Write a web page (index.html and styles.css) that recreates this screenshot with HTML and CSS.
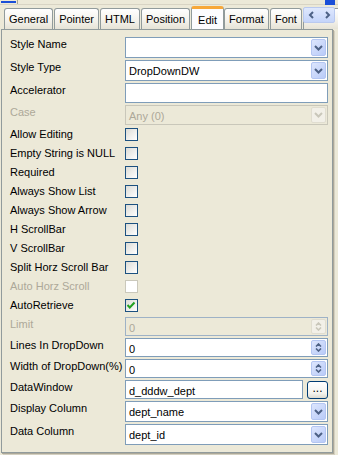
FILE: index.html
```html
<!DOCTYPE html>
<html lang="en">
  <head>
    <meta charset="UTF-8" />
    <title>Edit properties</title>
    <link rel="stylesheet" href="styles.css">
  </head>
  <body>
    <div class="topbar">
      <span class="blue-left"></span>
      <span class="tick"></span>
      <span class="blue-right"></span>
    </div>
    <div class="tabs">
      <div class="tab">General</div>
      <div class="tab">Pointer</div>
      <div class="tab">HTML</div>
      <div class="tab">Position</div>
      <div class="tab active">Edit</div>
      <div class="tab">Format</div>
      <div class="tab">Font</div>
      <div class="tab hidden-tab"></div>
      <div class="tab-scroll">
        <svg width="8" height="8" viewBox="0 0 8 8"><path d="M5 1 L2 4 L5 7" fill="none" stroke="#4d6185" stroke-width="2"/></svg>
        <svg width="8" height="8" viewBox="0 0 8 8"><path d="M3 1 L6 4 L3 7" fill="none" stroke="#4d6185" stroke-width="2"/></svg>
      </div>
    </div>

    <div class="panel">
      <div class="row first">
        <span class="lbl">Style Name</span>
        <div class="combo"><span class="val"></span><span class="dd"><svg width="9" height="6" viewBox="0 0 9 6"><path d="M1 1 L4.5 4.5 L8 1" fill="none" stroke="#4d6185" stroke-width="2"/></svg></span></div>
      </div>
      <div class="row">
        <span class="lbl">Style Type</span>
        <div class="combo"><span class="val">DropDownDW</span><span class="dd"><svg width="9" height="6" viewBox="0 0 9 6"><path d="M1 1 L4.5 4.5 L8 1" fill="none" stroke="#4d6185" stroke-width="2"/></svg></span></div>
      </div>
      <div class="row h20">
        <span class="lbl">Accelerator</span>
        <div class="edit"></div>
      </div>
      <div class="row h20">
        <span class="lbl off">Case</span>
        <div class="combo disabled"><span class="val">Any (0)</span><span class="dd"><svg width="9" height="6" viewBox="0 0 9 6"><path d="M1 1 L4.5 4.5 L8 1" fill="none" stroke="#c9c7ba" stroke-width="2"/></svg></span></div>
      </div>

      <div class="row chk"><span class="lbl">Allow Editing</span><span class="box"></span></div>
      <div class="row chk"><span class="lbl">Empty String is NULL</span><span class="box"></span></div>
      <div class="row chk"><span class="lbl">Required</span><span class="box"></span></div>
      <div class="row chk"><span class="lbl">Always Show List</span><span class="box"></span></div>
      <div class="row chk"><span class="lbl">Always Show Arrow</span><span class="box"></span></div>
      <div class="row chk"><span class="lbl">H ScrollBar</span><span class="box"></span></div>
      <div class="row chk"><span class="lbl">V ScrollBar</span><span class="box"></span></div>
      <div class="row chk"><span class="lbl">Split Horz Scroll Bar</span><span class="box"></span></div>
      <div class="row chk"><span class="lbl off">Auto Horz Scroll</span><span class="box off"></span></div>
      <div class="row chk">
        <span class="lbl">AutoRetrieve</span>
        <span class="box"><svg width="11" height="11" viewBox="0 0 11 11"><path d="M1.5 5 L3.8 7.5 L8.5 2.5" fill="none" stroke="#21a121" stroke-width="2"/></svg></span>
      </div>

      <div class="row h19">
        <span class="lbl off">Limit</span>
        <div class="combo disabled limit"><span class="val">0</span><span class="spin off"><svg width="7" height="4" viewBox="0 0 7 4"><path d="M1 3.5 L3.5 1 L6 3.5" fill="none" stroke="#c9c7ba" stroke-width="1.6"/></svg><svg width="7" height="4" viewBox="0 0 7 4"><path d="M1 0.5 L3.5 3 L6 0.5" fill="none" stroke="#c9c7ba" stroke-width="1.6"/></svg></span></div>
      </div>
      <div class="row h19">
        <span class="lbl">Lines In DropDown</span>
        <div class="combo"><span class="val">0</span><span class="spin"><svg width="7" height="4" viewBox="0 0 7 4"><path d="M1 3.5 L3.5 1 L6 3.5" fill="none" stroke="#4d6185" stroke-width="1.6"/></svg><svg width="7" height="4" viewBox="0 0 7 4"><path d="M1 0.5 L3.5 3 L6 0.5" fill="none" stroke="#4d6185" stroke-width="1.6"/></svg></span></div>
      </div>
      <div class="row h19">
        <span class="lbl">Width of DropDown(%)</span>
        <div class="combo"><span class="val">0</span><span class="spin"><svg width="7" height="4" viewBox="0 0 7 4"><path d="M1 3.5 L3.5 1 L6 3.5" fill="none" stroke="#4d6185" stroke-width="1.6"/></svg><svg width="7" height="4" viewBox="0 0 7 4"><path d="M1 0.5 L3.5 3 L6 0.5" fill="none" stroke="#4d6185" stroke-width="1.6"/></svg></span></div>
      </div>
      <div class="row h19">
        <span class="lbl">DataWindow</span>
        <div class="pick">
          <div class="edit"><span class="val">d_dddw_dept</span></div>
          <button type="button" class="dots">...</button>
        </div>
      </div>
      <div class="row">
        <span class="lbl">Display Column</span>
        <div class="combo"><span class="val">dept_name</span><span class="dd"><svg width="9" height="6" viewBox="0 0 9 6"><path d="M1 1 L4.5 4.5 L8 1" fill="none" stroke="#4d6185" stroke-width="2"/></svg></span></div>
      </div>
      <div class="row">
        <span class="lbl">Data Column</span>
        <div class="combo"><span class="val">dept_id</span><span class="dd"><svg width="9" height="6" viewBox="0 0 9 6"><path d="M1 1 L4.5 4.5 L8 1" fill="none" stroke="#4d6185" stroke-width="2"/></svg></span></div>
      </div>
    </div>
  </body>
</html>
```
FILE: styles.css
```css
* {
  box-sizing: border-box;
}
body {
  margin: 0;
  background-color: #ece9d8;
  font-family: "Liberation Sans", Arial, sans-serif;
  font-size: 11px;
  color: #000;
  width: 338px;
  height: 455px;
  overflow: hidden;
}
.topbar {
  display: flex;
  height: 5px;
  border-bottom: 1px solid #d8d4c4;
}
.blue-left {
  width: 15px;
  height: 2px;
  margin: 1px 0 0 1px;
  background-color: #1a4fd8;
}
.tick {
  width: 1px;
  height: 4px;
  margin-left: 1px;
  background-color: #a9a696;
}
.blue-right {
  width: 10px;
  height: 5px;
  margin-left: auto;
  margin-right: 3px;
  background-color: #1a4fd8;
}

/* tab strip */
.tabs {
  position: relative;
  display: flex;
  align-items: flex-end;
  height: 24px;
  padding-left: 4px;
  overflow: hidden;
}
.tab {
  height: 21px;
  margin-right: 1px;
  padding: 4px 4px 0;
  border: 1px solid #919b9c;
  border-bottom: none;
  border-radius: 3px 3px 0 0;
  background: linear-gradient(#ffffff, #f3f1ea 60%, #e6e3d6);
  white-space: nowrap;
}
.tab.active {
  position: relative;
  z-index: 2;
  height: 24px;
  margin: 0 0 -1px 0;
  padding: 5px 6px 0;
  border-top: 3px solid #f7a83a;
  background: #fcfcfe;
}
.hidden-tab {
  width: 40px;
  flex-shrink: 0;
}
.tab-scroll {
  position: absolute;
  top: 2px;
  right: 3px;
  z-index: 3;
  display: flex;
  align-items: center;
  justify-content: space-around;
  width: 32px;
  height: 16px;
  border: 1px solid #b9c9ef;
  border-radius: 2px;
  background: linear-gradient(#dfe8fd, #c4d4fa);
}

/* property panel */
.panel {
  position: relative;
  z-index: 1;
  width: 332px;
  height: 424px;
  margin-left: 1px;
  padding: 7px 3px 0 8px;
  border: 1px solid #919b9c;
  box-shadow: 1px 1px 0 #aca899, 2px 2px 0 #d4d0c0;
}
.row {
  display: flex;
  align-items: flex-start;
  height: 21px;
  margin-top: 2px;
}
.row.first {
  margin-top: 0;
}
.row.h20 {
  height: 20px;
}
.row.h19 {
  height: 19px;
}
.row.chk {
  height: 19px;
  margin-top: 0;
  align-items: center;
}
.lbl {
  width: 115px;
  flex-shrink: 0;
  padding-top: 1px;
  line-height: 13px;
  white-space: nowrap;
}
.row.chk .lbl {
  padding-top: 0;
}
.lbl.off {
  color: #aca899;
}

.combo,
.edit {
  display: flex;
  width: 203px;
  height: 100%;
  padding: 1px;
  border: 1px solid #7f9db9;
  background-color: #fff;
}
.val {
  flex: 1;
  padding: 3px 0 0 2px;
  line-height: 13px;
  white-space: nowrap;
}
.dd {
  display: flex;
  align-items: center;
  justify-content: center;
  width: 15px;
  border: 1px solid #b4c6f2;
  border-radius: 2px;
  background: linear-gradient(135deg, #dde6fd, #b9cbf8);
}
.spin {
  display: flex;
  flex-direction: column;
  align-items: center;
  justify-content: space-around;
  width: 15px;
  padding: 1px 0;
  border: 1px solid #b4c6f2;
  border-radius: 2px;
  background: linear-gradient(135deg, #dde6fd, #b9cbf8);
}
.combo.disabled {
  border-color: #c9c7ba;
  background-color: #ece9d8;
}
.combo.disabled .val {
  color: #aca899;
}
.combo.disabled .dd,
.spin.off {
  border-color: #e0ddd0;
  background: #f2f0e8;
}
.combo.limit {
  border-color: #9eb2c6;
}

.box {
  display: flex;
  align-items: center;
  justify-content: center;
  width: 13px;
  height: 13px;
  border: 1px solid #1c5180;
  background: linear-gradient(135deg, #dcdcd7, #ffffff);
}
.box.off {
  border-color: #cac8bb;
  background: #fff;
}

.pick {
  display: flex;
  align-items: center;
  width: 203px;
  height: 100%;
}
.pick .edit {
  width: 178px;
}
.dots {
  width: 21px;
  height: 18px;
  margin-left: auto;
  padding: 0 0 3px;
  border: 1px solid #003c74;
  border-radius: 3px;
  background: linear-gradient(#ffffff, #f4f3ee 70%, #dcdad0);
  font-family: "Liberation Sans", Arial, sans-serif;
  font-size: 12px;
  line-height: 10px;
}
```
